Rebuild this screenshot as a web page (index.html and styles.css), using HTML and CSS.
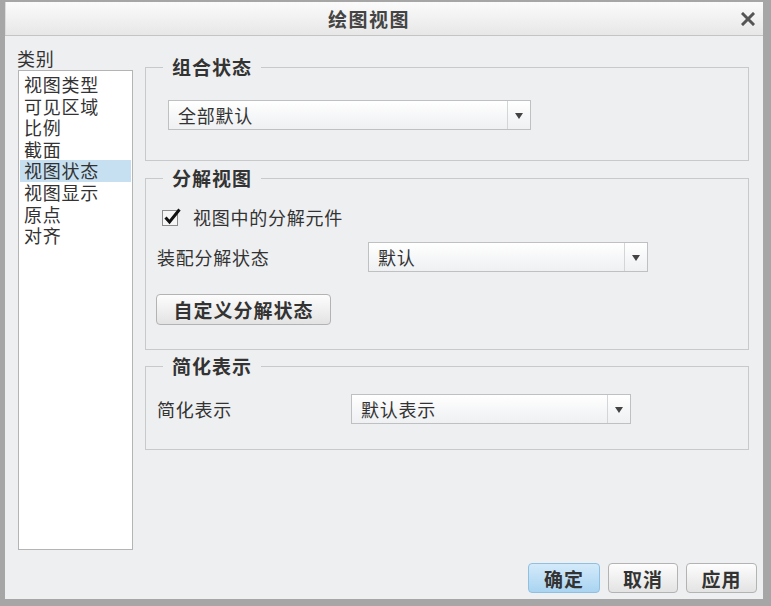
FILE: index.html
```html
<!DOCTYPE html>
<html lang="zh-CN">
  <head>
    <meta charset="utf-8" />
    <title>绘图视图</title>
    <link rel="stylesheet" href="styles.css">
  </head>

  <body>
    <div class="window">
      <div class="titlebar">
        <div class="title">绘图视图</div>
        <div class="close">
          <svg width="14" height="14" viewBox="0 0 14 14">
            <path d="M2 2 L12 12 M12 2 L2 12" stroke="#555" stroke-width="3" stroke-linecap="square" fill="none"/>
          </svg>
        </div>
      </div>

      <div class="dialog-body">
        <div class="main">
          <!-- Category list -->
          <div class="sidebar">
            <div class="sidebar-label">类别</div>
            <ul class="listbox">
              <li>视图类型</li>
              <li>可见区域</li>
              <li>比例</li>
              <li>截面</li>
              <li class="selected">视图状态</li>
              <li>视图显示</li>
              <li>原点</li>
              <li>对齐</li>
            </ul>
          </div>

          <div class="panel">
            <fieldset class="group group-combo">
              <legend>组合状态</legend>
              <div class="select select-wide">
                <span class="select-value">全部默认</span>
                <span class="select-arrow"></span>
              </div>
            </fieldset>

            <fieldset class="group group-explode">
              <legend>分解视图</legend>
              <div class="check-row">
                <svg class="checkbox" width="22" height="22" viewBox="0 0 22 22">
                  <rect x="1.5" y="4.5" width="15" height="15" fill="#f6f6f6" stroke="#8c8c8c"/>
                  <path d="M4.5 11.5 L8.5 16 L18.5 3.5" stroke="#111" stroke-width="3" fill="none"/>
                </svg>
                <span>视图中的分解元件</span>
              </div>
              <div class="form-row">
                <span class="field-label label-explode">装配分解状态</span>
                <div class="select">
                  <span class="select-value">默认</span>
                  <span class="select-arrow"></span>
                </div>
              </div>
              <button class="btn btn-custom">自定义分解状态</button>
            </fieldset>

            <fieldset class="group group-simple">
              <legend>简化表示</legend>
              <div class="form-row">
                <span class="field-label label-simple">简化表示</span>
                <div class="select">
                  <span class="select-value">默认表示</span>
                  <span class="select-arrow"></span>
                </div>
              </div>
            </fieldset>
          </div>
        </div>

        <div class="footer">
          <button class="btn btn-footer btn-primary">确定</button>
          <button class="btn btn-footer btn-cancel">取消</button>
          <button class="btn btn-footer btn-apply">应用</button>
        </div>
      </div>
    </div>
  </body>
</html>
```

FILE: styles.css
```css
body, html {
  margin: 0;
  padding: 0;
  width: 100%;
  height: 100%;
}
body {
  font-family: "Noto Sans CJK SC", sans-serif;
  font-size: 18px;
  letter-spacing: 0.75px;
  color: #333;
}
.window {
  width: 771px;
  height: 606px;
  box-sizing: border-box;
  border-style: solid;
  border-color: #a6a6a6;
  border-width: 2px 8px 7px 5px;
  display: flex;
  flex-direction: column;
}
.titlebar {
  height: 33px;
  border-bottom: 1px solid #c4c4c4;
  background: linear-gradient(#fbfbfb, #e7e7e7);
  display: flex;
  align-items: center;
  box-shadow: inset 1px 0 0 #dcdcdc;
}
.title {
  flex: 1;
  text-align: center;
  font-weight: bold;
  font-size: 19px;
  letter-spacing: 1.5px;
  color: #444;
  line-height: 20px;
}
.close {
  width: 30px;
  display: flex;
  justify-content: center;
  align-items: center;
}

.dialog-body {
  flex: 1;
  background: #eeeff1;
  padding: 12px 6px 6px 12px;
  display: flex;
  flex-direction: column;
  min-height: 0;
}
.main {
  flex: 1;
  display: flex;
  gap: 12px;
  min-height: 0;
}

/* left category list */
.sidebar {
  width: 116px;
  display: flex;
  flex-direction: column;
}
.sidebar-label {
  height: 20px;
  line-height: 20px;
  margin-bottom: 2px;
}
.listbox {
  flex: 1;
  margin: 0 0 0 1px;
  padding: 3px 1px;
  list-style: none;
  background: #fff;
  border: 1px solid #b4b4b4;
}
.listbox li {
  height: 21.6px;
  line-height: 21.6px;
  padding-left: 4px;
  white-space: nowrap;
}
.listbox li.selected {
  background: #c6e0f1;
}

/* right side groups */
.panel {
  flex: 1;
  margin: 9px 8px 0 0;
  display: flex;
  flex-direction: column;
}
.group {
  margin: 0;
  min-width: 0;
  border: 1px solid #c8c9cb;
  padding: 0 10px 24px 11px;
}
.group legend {
  font-weight: bold;
  font-size: 19px;
  letter-spacing: 1px;
  line-height: 20px;
  padding: 0 9px;
  margin-left: 6px;
  color: #333;
}
.group-combo {
  padding-top: 23px;
  padding-bottom: 30px;
}
.group-explode {
  margin-top: 7px;
  padding-top: 17px;
}
.group-simple {
  margin-top: 6px;
  padding-top: 18px;
  padding-bottom: 25px;
}

.select {
  width: 280px;
  height: 30px;
  box-sizing: border-box;
  border: 1px solid #bfc0c2;
  background: linear-gradient(#ffffff, #eef0f2);
  display: flex;
  align-items: center;
}
.select-wide {
  width: 363px;
  margin-left: 11px;
}
.select-value {
  flex: 1;
  padding-left: 9px;
}
.select-arrow {
  width: 22px;
  height: 100%;
  border-left: 1px solid #d4d5d7;
  position: relative;
}
.select-arrow:after {
  content: "";
  position: absolute;
  left: 7px;
  top: 12px;
  border-left: 4px solid transparent;
  border-right: 4px solid transparent;
  border-top: 6px solid #444;
}

.check-row {
  height: 24px;
  display: flex;
  align-items: center;
  margin-left: 4px;
}
.checkbox {
  margin-right: 10px;
}
.form-row {
  display: flex;
  align-items: center;
}
.group-explode .form-row {
  margin-top: 13px;
}
.field-label {
  flex: none;
}
.label-explode {
  width: 211px;
}
.label-simple {
  width: 194px;
}

.btn {
  font-family: "Noto Sans CJK SC", sans-serif;
  font-weight: bold;
  font-size: 19px;
  letter-spacing: 1px;
  color: #333;
  height: 30px;
  box-sizing: border-box;
  border: 1px solid #b3b3b3;
  border-radius: 4px;
  background: linear-gradient(#fdfdfd, #e3e3e3);
  padding: 0;
  cursor: pointer;
}
.btn-custom {
  display: block;
  width: 175px;
  height: 31px;
  margin: 22px 0 0 -1px;
}

.footer {
  margin-top: 13px;
  display: flex;
  justify-content: flex-end;
  gap: 8px;
}
.btn-footer {
  width: 71px;
}
.btn-primary {
  width: 72px;
  border-color: #8fc0e2;
  background: linear-gradient(#d3eafa, #a9d4f1);
}
.btn-cancel {
  width: 70px;
}
```
